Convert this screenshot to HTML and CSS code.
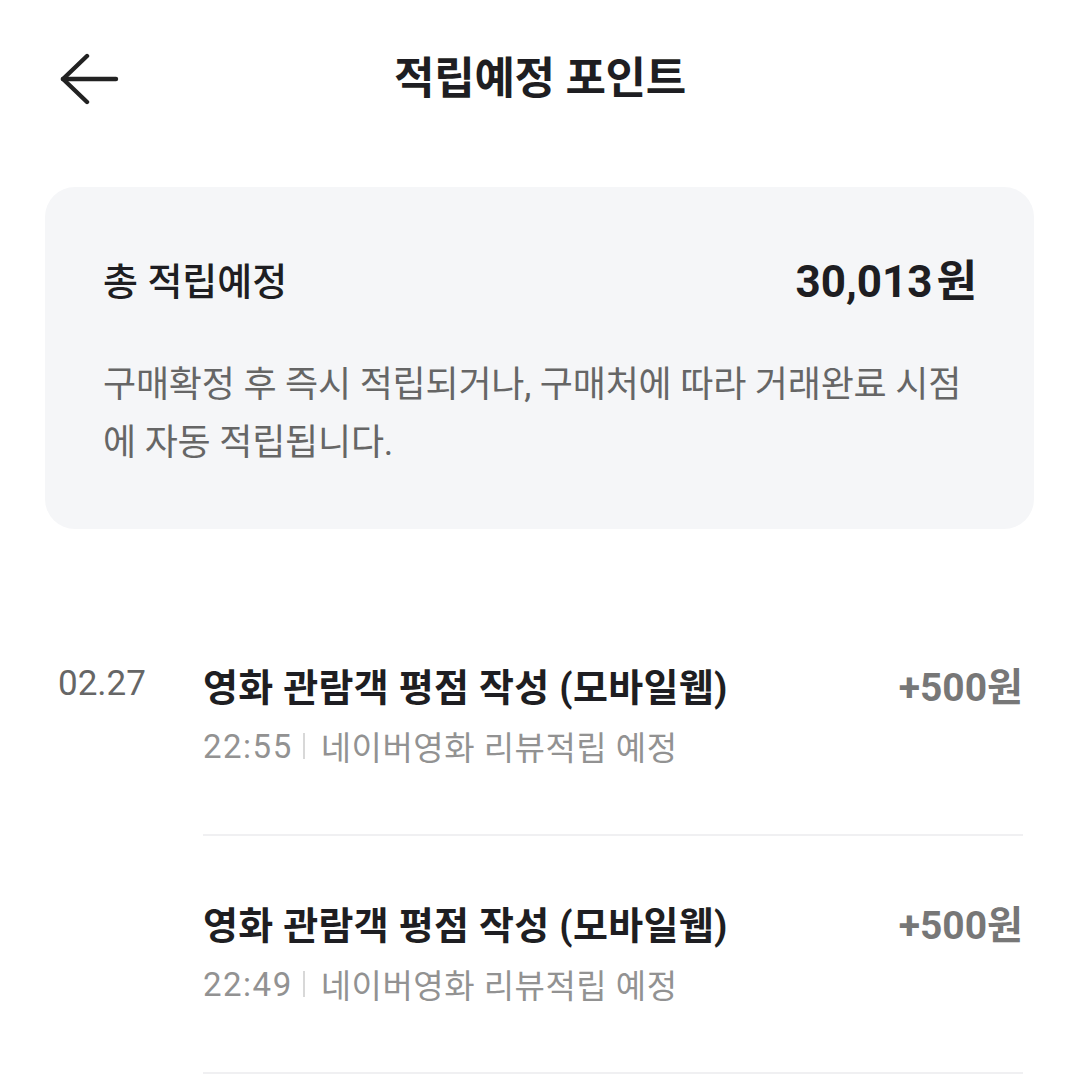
FILE: index.html
```html
<!DOCTYPE html>
<html lang="ko">
<head>
<meta charset="utf-8">
<link rel="stylesheet" href="styles.css">
</head>
<body>
<header class="header">
  <button class="back" aria-label="뒤로">
    <svg width="60" height="52" viewBox="0 0 60 52" fill="none" stroke="#222" stroke-width="4.4" stroke-linecap="round" stroke-linejoin="round">
      <path d="M3 26 H56"/>
      <path d="M27 3 L3 26 L27 49"/>
    </svg>
  </button>
  <h1 class="title">적립예정 포인트</h1>
</header>

<section class="card">
  <div class="card-row">
    <span class="card-label">총 적립예정</span>
    <span class="card-total">30,013<span class="won">원</span></span>
  </div>
  <p class="card-desc">구매확정 후 즉시 적립되거나, 구매처에 따라 거래완료 시점에 자동 적립됩니다.</p>
</section>

<ul class="list">
  <li class="item">
    <span class="date">02.27</span>
    <div class="content">
      <div class="content-top">
        <span class="item-title">영화 관람객 평점 작성 (모바일웹)</span>
        <span class="amount">+500원</span>
      </div>
      <div class="sub"><span class="time">22:55</span><span class="bar"></span>네이버영화 리뷰적립 예정</div>
    </div>
  </li>
  <li class="item">
    <span class="date"></span>
    <div class="content">
      <div class="content-top">
        <span class="item-title">영화 관람객 평점 작성 (모바일웹)</span>
        <span class="amount">+500원</span>
      </div>
      <div class="sub"><span class="time">22:49</span><span class="bar"></span>네이버영화 리뷰적립 예정</div>
    </div>
  </li>
</ul>
</body>
</html>
```

FILE: styles.css
```css
* { box-sizing: border-box; }
html, body { margin: 0; padding: 0; background: #fff; }
body {
  font-family: Roboto, "Noto Sans CJK KR", sans-serif;
  color: #222;
  width: 1080px;
  overflow: hidden;
}

.header {
  position: relative;
  height: 158px;
  display: flex;
  align-items: center;
  justify-content: center;
}
.back {
  position: absolute;
  left: 60px;
  top: 53px;
  padding: 0;
  border: 0;
  background: none;
  line-height: 0;
}
.title {
  margin: 0;
  font-size: 44px;
  font-weight: 700;
  letter-spacing: -0.3px;
  color: #1e1e22;
  line-height: 60px;
}

.card {
  margin: 29px 46px 0 45px;
  background: #f5f6f8;
  border-radius: 30px;
  padding: 60px 57px 57px 58px;
}
.card-row {
  display: flex;
  justify-content: space-between;
  align-items: center;
  height: 62px;
}
.card-label {
  font-size: 38px;
  font-weight: 500;
  color: #1e1e22;
}
.card-total {
  font-size: 44px;
  font-weight: 700;
  color: #1e1e22;
}
.card-total .won { margin-left: 4px; }
.card-desc {
  margin: 47px 0 0;
  font-size: 36px;
  line-height: 58px;
  letter-spacing: -0.2px;
  color: #666;
}

.list {
  list-style: none;
  margin: 69px 0 0;
  padding: 0 57px 0 58px;
}
.item {
  display: flex;
}
.date {
  width: 145px;
  flex: none;
  padding-top: 60px;
  font-size: 35px;
  line-height: 52px;
  color: #666;
}
.content {
  flex: 1;
  padding: 60px 0 63px;
  border-bottom: 2px solid #f0f0f2;
}
.content-top {
  display: flex;
  justify-content: space-between;
  align-items: center;
  height: 52px;
}
.item-title {
  font-size: 38px;
  font-weight: 700;
  letter-spacing: 0.3px;
  color: #1e1e22;
}
.amount {
  font-size: 39px;
  font-weight: 700;
  color: #777;
}
.sub {
  margin-top: 11px;
  height: 50px;
  display: flex;
  align-items: center;
  font-size: 33px;
  letter-spacing: 0.5px;
  color: #929292;
}
.time { letter-spacing: 1.5px; }
.bar {
  width: 2px;
  height: 26px;
  background: #d8d8d8;
  margin: 0 16px 0 10px;
}
```
